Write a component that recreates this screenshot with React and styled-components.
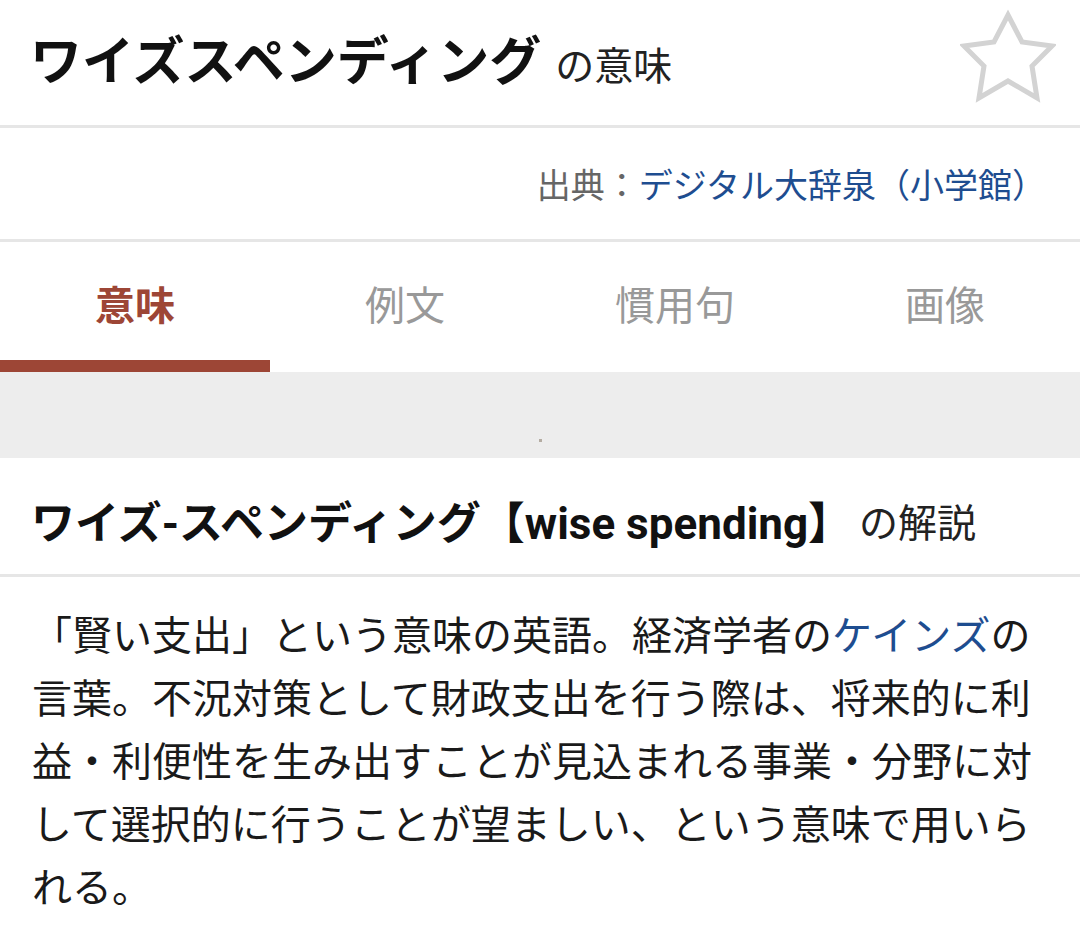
import React from 'react';
import styled, { createGlobalStyle } from 'styled-components';

const GlobalStyle = createGlobalStyle`
  html, body {
    margin: 0;
    padding: 0;
    background: #fff;
  }
  body {
    font-family: Roboto, "Noto Sans CJK JP", "Noto Sans", sans-serif;
    color: #1a1a1a;
  }
`;

const tabs = ['意味', '例文', '慣用句', '画像'];

const StarIcon = () => (
  <svg width="96" height="96" viewBox="0 0 96 96">
    <polygon
      points="48,6 62,33 92,37 72,57 77,89 48,72 19,89 24,57 4,37 34,33"
      fill="none"
      stroke="#d3d3d3"
      strokeWidth="5"
      strokeLinejoin="miter"
    />
  </svg>
);

const App = () => {
  return (
    <S.page>
      <GlobalStyle />
      <S.header>
        <S.title>
          <S.word>ワイズスペンディング</S.word>
          <S.suffix>の意味</S.suffix>
        </S.title>
        <S.star>
          <StarIcon />
        </S.star>
      </S.header>

      <S.source>
        出典：<S.link>デジタル大辞泉（小学館）</S.link>
      </S.source>

      <S.tabs>
        {tabs.map((t, i) => (
          <S.tab key={t} $active={i === 0}>
            {t}
          </S.tab>
        ))}
      </S.tabs>

      <S.adArea>
        <S.dot />
      </S.adArea>

      <S.entryHead>
        <S.entryWord>ワイズ-スペンディング【wise spending】</S.entryWord>
        <S.entrySuffix>の解説</S.entrySuffix>
      </S.entryHead>

      <S.body>
        「賢い支出」という意味の英語。経済学者の<S.link>ケインズ</S.link>の言葉。不況対策として財政支出を行う際は、将来的に利益・利便性を生み出すことが見込まれる事業・分野に対して選択的に行うことが望ましい、という意味で用いられる。
      </S.body>
    </S.page>
  );
};

export default App;

const S = {
  page: styled.div`
    width: 1080px;
    min-height: 933px;
    background: #fff;
    overflow: hidden;
  `,

  header: styled.div`
    height: 125px;
    display: flex;
    align-items: center;
    justify-content: space-between;
    padding: 0 24px 0 30px;
    border-bottom: 3px solid #e6e6e6;
    box-sizing: content-box;
  `,

  title: styled.h1`
    margin: 0;
    display: flex;
    align-items: baseline;
    gap: 14px;
    padding-top: 2px;
  `,

  word: styled.span`
    font-size: 52px;
    font-weight: 700;
    color: #111;
    line-height: 1.2;
  `,

  suffix: styled.span`
    font-size: 39px;
    font-weight: 400;
    color: #222;
  `,

  star: styled.div`
    display: flex;
    align-items: center;
    margin-top: -12px;
  `,

  source: styled.div`
    height: 114px;
    display: flex;
    align-items: center;
    justify-content: flex-end;
    padding: 0 34px;
    font-size: 34px;
    color: #666;
    border-bottom: 3px solid #e6e6e6;
    box-sizing: border-box;
  `,

  link: styled.span`
    color: #1e4d90;
  `,

  tabs: styled.div`
    display: grid;
    grid-template-columns: repeat(4, 1fr);
    height: 130px;
  `,

  tab: styled.div`
    display: flex;
    align-items: center;
    justify-content: center;
    padding-top: 4px;
    font-size: 40px;
    font-weight: ${(p) => (p.$active ? 700 : 400)};
    color: ${(p) => (p.$active ? '#9d4636' : '#999')};
    border-bottom: 12px solid ${(p) => (p.$active ? '#9d4636' : 'transparent')};
  `,

  adArea: styled.div`
    height: 86px;
    background: #ededed;
    display: flex;
    justify-content: center;
    align-items: flex-end;
    padding-bottom: 16px;
    box-sizing: border-box;
  `,

  dot: styled.div`
    width: 3px;
    height: 3px;
    background: #b4aca2;
  `,

  entryHead: styled.div`
    height: 119px;
    display: flex;
    align-items: center;
    gap: 7px;
    padding: 8px 32px 0 31px;
    border-bottom: 3px solid #e6e6e6;
    box-sizing: border-box;
  `,

  entryWord: styled.h2`
    margin: 0;
    font-size: 44px;
    font-weight: 700;
    color: #111;
  `,

  entrySuffix: styled.span`
    font-size: 39px;
    color: #222;
  `,

  body: styled.p`
    margin: 0;
    padding: 28px 27px 0 32px;
    font-size: 40px;
    line-height: 63px;
    color: #1a1a1a;
  `,
};
